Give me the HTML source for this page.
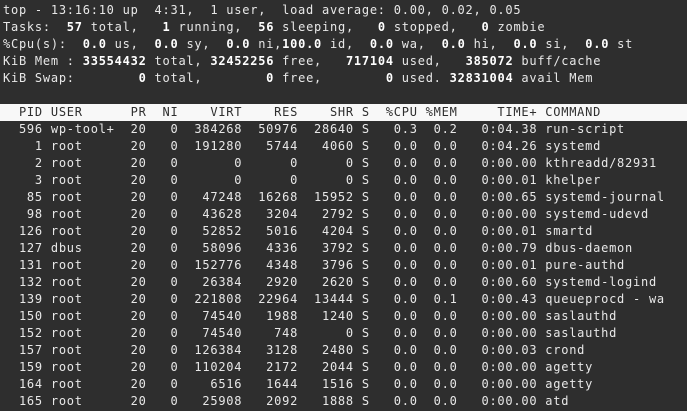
<!DOCTYPE html><html><head><style>
html,body{margin:0;padding:0;background:#2e2e2e;width:687px;height:411px;overflow:hidden}
pre{margin:0;padding:2px 0 0 3px;font-family:"DejaVu Sans Mono","Liberation Mono",monospace;font-size:12px;letter-spacing:0.75px;line-height:17px;color:#e8e8e8;white-space:pre}
b{font-weight:bold;color:#fff}
.h{display:block;background:#f8f8f8;color:#2e2e2e;margin-left:-3px;padding-left:3px;width:687px}
</style></head><body><pre>top - 13:16:10 up  4:31,  1 user,  load average: 0.00, 0.02, 0.05
Tasks: <b> 57 </b>total, <b>  1 </b>running, <b> 56 </b>sleeping, <b>  0 </b>stopped, <b>  0 </b>zombie
%Cpu(s): <b> 0.0 </b>us, <b> 0.0 </b>sy, <b> 0.0 </b>ni,<b>100.0 </b>id, <b> 0.0 </b>wa, <b> 0.0 </b>hi, <b> 0.0 </b>si, <b> 0.0 </b>st
KiB Mem : <b>33554432 </b>total,<b> 32452256 </b>free, <b>  717104 </b>used, <b>  385072 </b>buff/cache
KiB Swap: <b>       0 </b>total, <b>       0 </b>free, <b>       0 </b>used.<b> 32831004 </b>avail Mem

<span class="h">  PID USER      PR  NI    VIRT    RES    SHR S  %CPU %MEM     TIME+ COMMAND</span>  596 wp-tool+  20   0  384268  50976  28640 S   0.3  0.2   0:04.38 run-script
    1 root      20   0  191280   5744   4060 S   0.0  0.0   0:04.26 systemd
    2 root      20   0       0      0      0 S   0.0  0.0   0:00.00 kthreadd/82931
    3 root      20   0       0      0      0 S   0.0  0.0   0:00.01 khelper
   85 root      20   0   47248  16268  15952 S   0.0  0.0   0:00.65 systemd-journal
   98 root      20   0   43628   3204   2792 S   0.0  0.0   0:00.00 systemd-udevd
  126 root      20   0   52852   5016   4204 S   0.0  0.0   0:00.01 smartd
  127 dbus      20   0   58096   4336   3792 S   0.0  0.0   0:00.79 dbus-daemon
  131 root      20   0  152776   4348   3796 S   0.0  0.0   0:00.01 pure-authd
  132 root      20   0   26384   2920   2620 S   0.0  0.0   0:00.60 systemd-logind
  139 root      20   0  221808  22964  13444 S   0.0  0.1   0:00.43 queueprocd - wa
  150 root      20   0   74540   1988   1240 S   0.0  0.0   0:00.00 saslauthd
  152 root      20   0   74540    748      0 S   0.0  0.0   0:00.00 saslauthd
  157 root      20   0  126384   3128   2480 S   0.0  0.0   0:00.03 crond
  159 root      20   0  110204   2172   2044 S   0.0  0.0   0:00.00 agetty
  164 root      20   0    6516   1644   1516 S   0.0  0.0   0:00.00 agetty
  165 root      20   0   25908   2092   1888 S   0.0  0.0   0:00.00 atd</pre></body></html>
